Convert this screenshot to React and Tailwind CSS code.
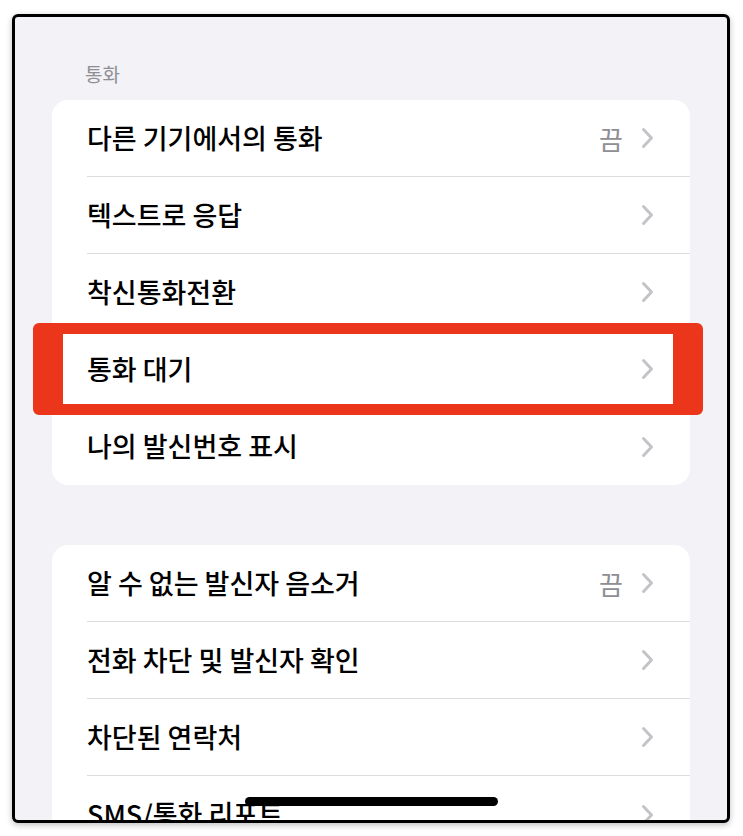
import React from "react";

const groups = [
  [
    { label: "다른 기기에서의 통화", value: "끔" },
    { label: "텍스트로 응답" },
    { label: "착신통화전환" },
    { label: "통화 대기" },
    { label: "나의 발신번호 표시" },
  ],
  [
    { label: "알 수 없는 발신자 음소거", value: "끔" },
    { label: "전화 차단 및 발신자 확인" },
    { label: "차단된 연락처" },
    { label: "SMS/통화 리포트" },
  ],
];

function Chevron() {
  return (
    <svg width="13" height="22" viewBox="0 0 13 22" fill="none">
      <path
        d="M2.5 2.5 L10.5 11 L2.5 19.5"
        stroke="#c4c4c8"
        strokeWidth="3"
        strokeLinecap="round"
        strokeLinejoin="round"
      />
    </svg>
  );
}

function Row({ label, value, last }) {
  return (
    <div className="pl-[35px]">
      <div className={`flex h-[77px] items-center pr-[36px] ${last ? "" : "border-b border-[#dcdce0]"}`}>
        <span className="flex-1 whitespace-nowrap text-[27px] font-medium text-black">{label}</span>
        {value && <span className="mr-[18px] text-[26px] text-[#8e8e93]">{value}</span>}
        <Chevron />
      </div>
    </div>
  );
}

export default function App() {
  return (
    <div
      className="relative h-[836px] w-[743px] overflow-hidden bg-white"
      style={{ fontFamily: '"Noto Sans CJK KR", "Noto Sans", sans-serif' }}
    >
      <div className="ml-[12px] mt-[14px] h-[809px] w-[718px] overflow-hidden rounded-[6px] border-[3px] border-black bg-[#f2f2f7] shadow-[0_2px_6px_rgba(0,0,0,0.25)]">
        <div className="flex flex-col gap-[60px] px-[37px] pt-[44px]">
          {groups.map((rows, gi) => (
            <div key={gi} className="flex flex-col">
              {gi === 0 && (
                <div className="mb-[13px] pl-[33px] text-[19px] leading-[26px] text-[#8e8e93]">통화</div>
              )}
              <div className="overflow-hidden rounded-[16px] bg-white">
                {rows.map((r, i) => (
                  <Row key={r.label} label={r.label} value={r.value} last={i === rows.length - 1} />
                ))}
              </div>
            </div>
          ))}
        </div>
      </div>

      {/* red marker box */}
      <div className="absolute left-[33px] top-[323px] h-[92px] w-[670px] rounded-[6px] border-x-[30px] border-y-[11px] border-[#eb361c]" />

      {/* home indicator */}
      <div className="absolute left-[245px] top-[797px] h-[9px] w-[253px] rounded-full bg-black" />
    </div>
  );
}
